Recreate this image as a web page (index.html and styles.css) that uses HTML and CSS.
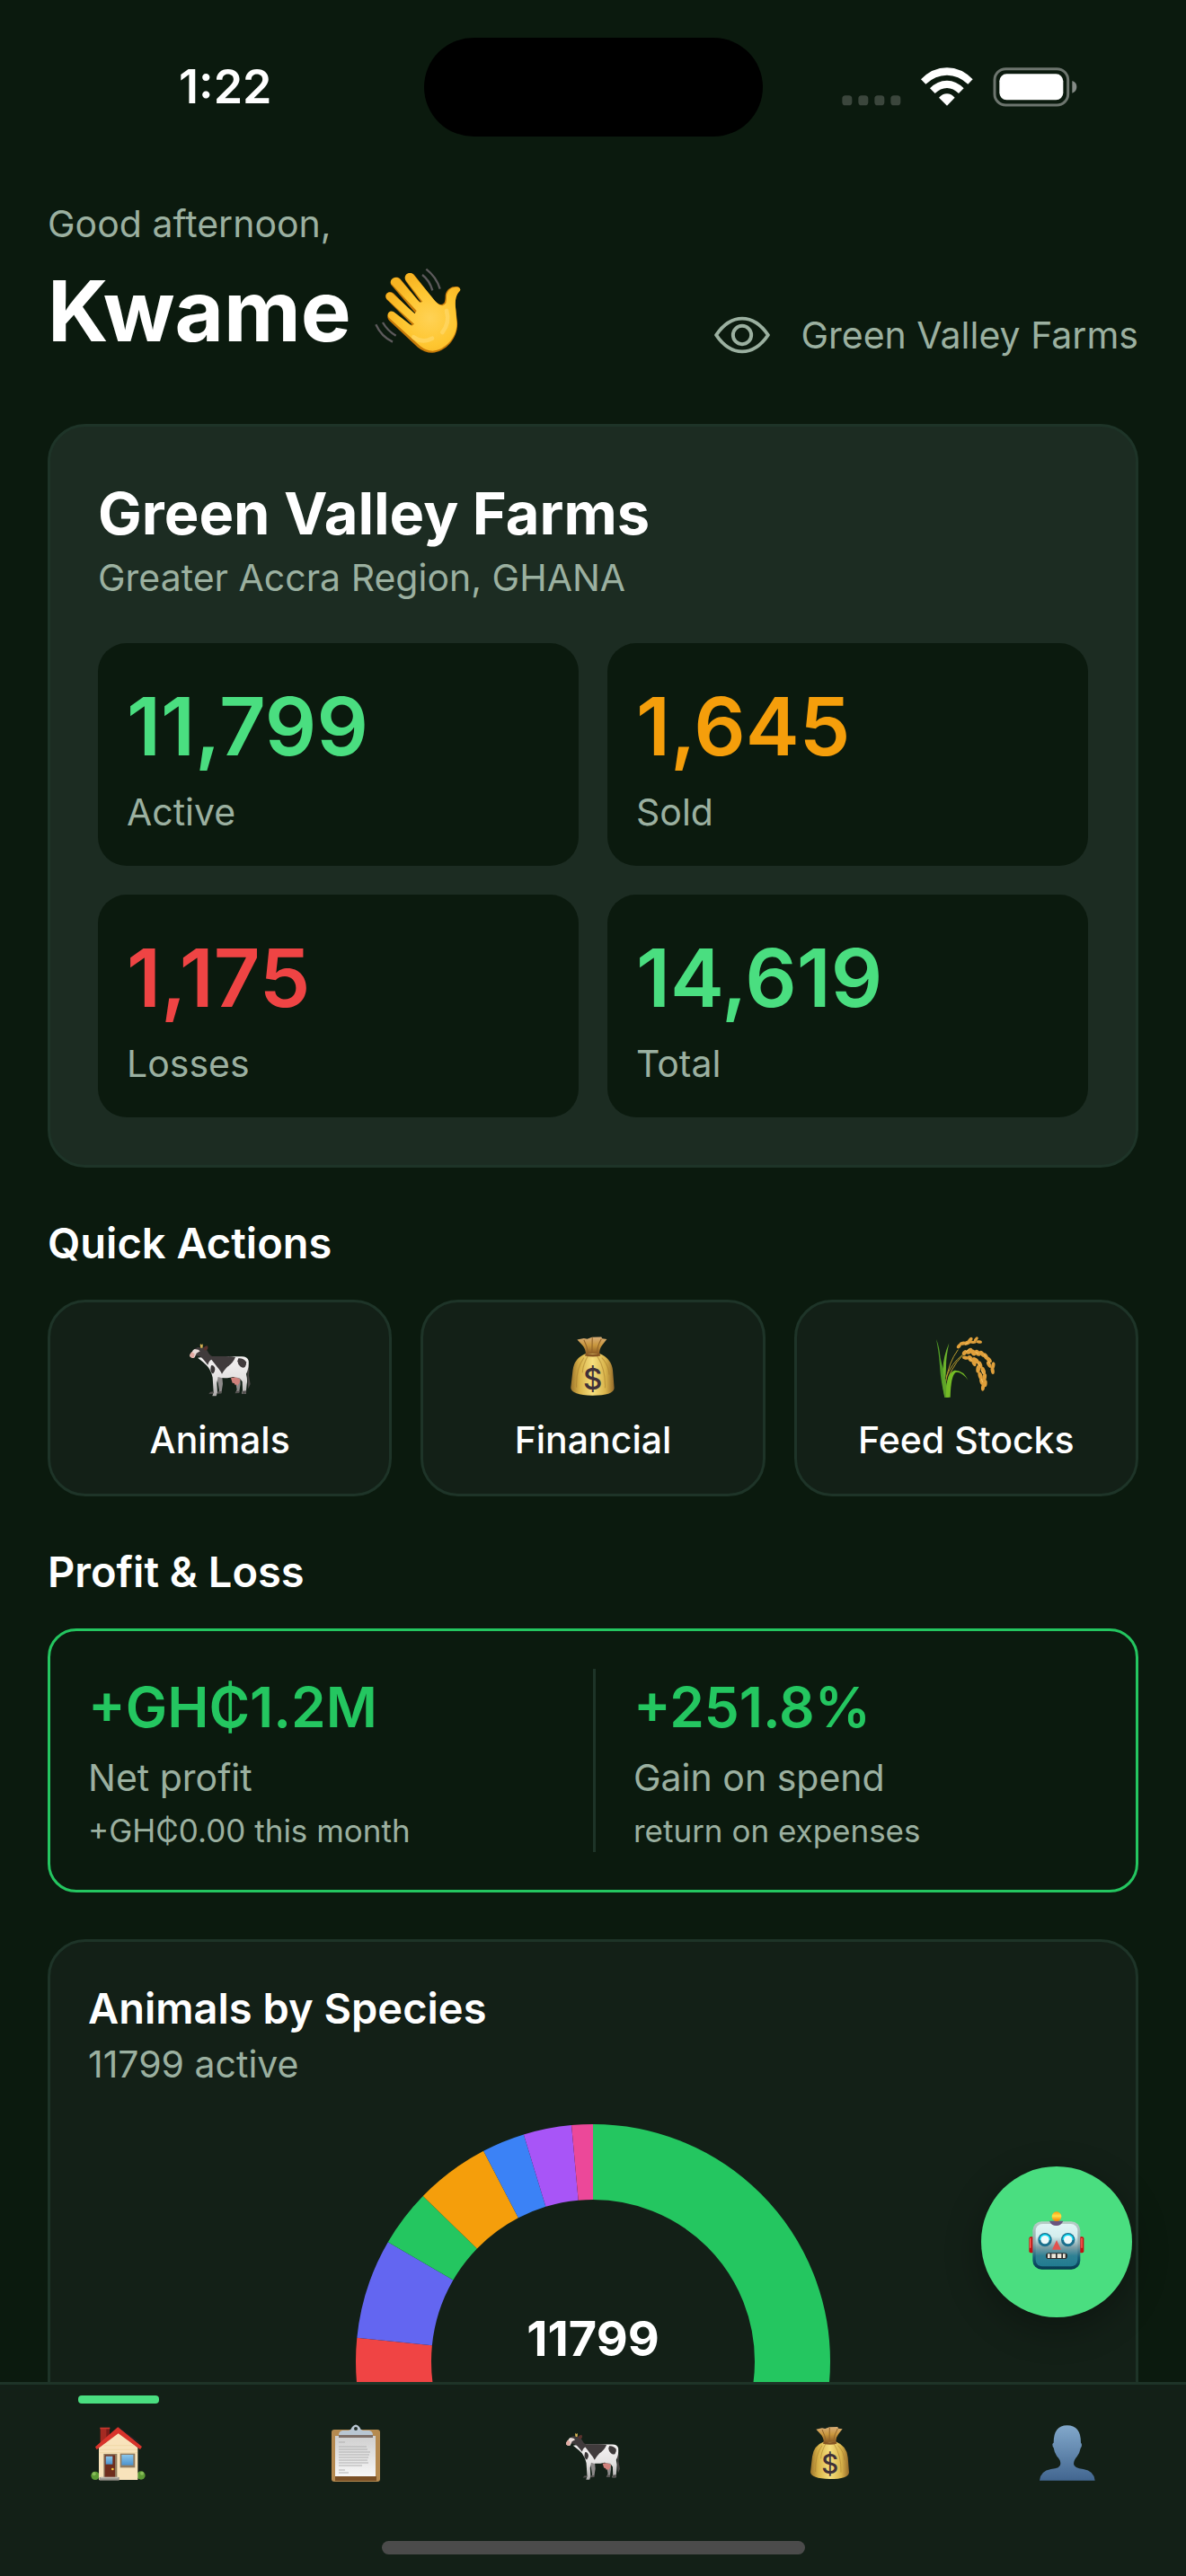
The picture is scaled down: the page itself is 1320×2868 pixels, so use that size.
FILE: index.html
```html
<!DOCTYPE html>
<html lang="en">
<head>
<meta charset="utf-8">
<meta name="viewport" content="width=device-width, initial-scale=1">
<title>Green Valley Farms</title>
<link rel="stylesheet" href="styles.css">
</head>
<body>
<svg class="defs" aria-hidden="true">
  <defs>
    <linearGradient id="bag-body" x1="0" x2="1" y1="0" y2="0">
      <stop offset="0" stop-color="#9c742c"/><stop offset=".2" stop-color="#d8b248"/><stop offset=".5" stop-color="#f6df7e"/><stop offset=".8" stop-color="#d9b44b"/><stop offset="1" stop-color="#94692a"/>
    </linearGradient>
    <linearGradient id="bag-neck" x1="0" x2="0" y1="0" y2="1">
      <stop offset="0" stop-color="#d9ae78"/><stop offset=".5" stop-color="#c8963c"/><stop offset="1" stop-color="#8a5a24"/>
    </linearGradient>
    <linearGradient id="person-fill" x1="0" x2="0" y1="0" y2="1">
      <stop offset="0" stop-color="#82a8cb"/><stop offset="1" stop-color="#426690"/>
    </linearGradient>
    <linearGradient id="robot-face" x1="0" x2="0" y1="0" y2="1">
      <stop offset="0" stop-color="#e0f5f5"/><stop offset=".3" stop-color="#d4eeee"/><stop offset=".55" stop-color="#7d9ea6"/><stop offset=".75" stop-color="#2f8194"/><stop offset="1" stop-color="#217b90"/>
    </linearGradient>
    <linearGradient id="robot-rim" x1="0" x2="0" y1="0" y2="1">
      <stop offset="0" stop-color="#b9cdc8"/><stop offset=".45" stop-color="#8ea9ab"/><stop offset=".75" stop-color="#15607a"/><stop offset="1" stop-color="#06384e"/>
    </linearGradient>
    <linearGradient id="bulb" x1="0" x2="0" y1="0" y2="1">
      <stop offset="0" stop-color="#ff9d0a"/><stop offset=".45" stop-color="#ffe04a"/><stop offset="1" stop-color="#f47c00"/>
    </linearGradient>
    <linearGradient id="cow-body" x1="0" x2="0" y1="0" y2="1">
      <stop offset="0" stop-color="#f4f2f2"/><stop offset=".55" stop-color="#e4e2e2"/><stop offset="1" stop-color="#aaa7a7"/>
    </linearGradient>
    <linearGradient id="paper" x1="0" x2="0" y1="0" y2="1">
      <stop offset="0" stop-color="#cfcfcf"/><stop offset="1" stop-color="#f7f7f7"/>
    </linearGradient>
    <linearGradient id="glass" x1="0" x2="0" y1="0" y2="1">
      <stop offset="0" stop-color="#8cc6ea"/><stop offset="1" stop-color="#4c93cd"/>
    </linearGradient>
    <radialGradient id="skin" gradientUnits="userSpaceOnUse" cx="235" cy="215" r="150">
      <stop offset="0" stop-color="#ffd255"/><stop offset=".6" stop-color="#fec630"/><stop offset="1" stop-color="#f7b423"/>
    </radialGradient>

    <symbol id="cow" viewBox="27 15 216 216">
      <path d="M226 95q8 28 5 60l5 28-7 16q-3-25-3-45z" fill="#4a4646"/>
      <path d="M122 155l20 5 2 22-5 32h-11l4-10-4-24zM182 155l20-2 1 30-5 30h-12l5-12z" fill="#8c8989"/>
      <path d="M60 95l30-4 110 0q26-3 30 14 2 25-8 44 5 20 2 34l-3 32h-14l3-12-1-28-9-12-22-4q-30 8-50 0l-4 20 2 32-4 12h-13l4-12-3-50q-4-20-16-36-10-12-34-30z" fill="url(#cow-body)"/>
      <path d="M50 65l10-5 24 1 9 12q8 16 16 17l45 0q18 0 32 3-8 20-27 32-12 13-18 24-7-14-15-22-10-14-20-26-8 3-12 18-12-16-20-24-10-8-24-7z" fill="#403b3c"/>
      <path d="M196 97q16-2 26 12 2 10-4 17-8 5-16-2-8-7-9-18z" fill="#403b3c"/>
      <path d="M106 120q9-1 12 12 0 10-6 16-8-2-9-14 0-10 3-14z" fill="#393536"/>
      <path d="M50 66q-6 2-8 8l-5 7q-5 4-3 10 8 8 16 3l6-14 12-7-6-5z" fill="#e9dcd9"/>
      <path d="M40 75q-7 8-6 15 5 7 13 5l3-13z" fill="#e2aaa2"/>
      <path d="M80 66q0-9 12-11 5 6 1 12-5 5-12 2z" fill="#5a312d"/>
      <path d="M70 62q-4-6-1-14l4 4 4-3q1 8-1 13z" fill="#d6b254"/>
      <path d="M171 163q14-6 31 4-1 14-7 17l-1 6-4-6-5 2-3-6-6-1z" fill="#cf817c"/>
      <path d="M102 209l11-1-2 7-14 1zM129 208l12-1-4 7-14 1zM190 206l11 0-3 7-14 1zM210 206l13-1-2 10-13 1z" fill="#53504f"/>
    </symbol>

    <symbol id="bag" viewBox="276 897 192 192">
      <path d="M352 955q-36 14-40 50l-6 52q2 22 64 23 63 0 65-22l-4-50q-3-38-41-53z" fill="url(#bag-body)"/>
      <path d="M345 968q-24 32-22 88M357 962q-16 30-16 50M384 962q26 40 24 96M398 968q20 20 22 50" fill="none" stroke="#a67c2c" stroke-width="3" opacity=".55"/>
      <path d="M325 914l20-4 10 2 14-5 28-1 2 5 14 2-14 18q-8 10-8 25l-40 1q-2-18-12-28z" fill="url(#bag-neck)"/>
      <path d="M345 915q10 20 13 40M370 908l-1 46M397 912q-12 20-14 43" fill="none" stroke="#93652a" stroke-width="3"/>
      <path d="M350 955q20 6 42 0l2 7q-22 6-46 0z" fill="#865522"/>
      <text x="371" y="1061" class="bag-sign">$</text>
    </symbol>

    <symbol id="rice" viewBox="30 15 216 216">
      <path d="M76 226q-4-60 14-88 16-30 38-52M70 180q10-70 42-112M72 160q18-46 55-75" fill="none" stroke="#b89a2e" stroke-width="3"/>
      <path d="M67 227q-14-60-16-105Q47 70 39 33q10 22 14 62 4 20 10 38 12 50 16 94z" fill="#4f9a26"/>
      <path d="M63 150q-6-46 19-104-10 45-10 76 0 30-4 50z" fill="#6cb42c"/>
      <path d="M67 227q-10-50-6-90 12 30 20 90z" fill="#5fa329"/>
      <path d="M72 227q-2-80 28-90 28-2 46 33-24-30-42-26-16 10-18 83z" fill="#74bb25"/>
      <g fill="#e0a03b">
        <ellipse cx="115" cy="56" rx="9" ry="6" transform="rotate(-50 115 56)"/><ellipse cx="127" cy="47" rx="11" ry="6" transform="rotate(-10 127 47)"/><ellipse cx="143" cy="45" rx="12" ry="7" transform="rotate(-25 143 45)"/><ellipse cx="152" cy="36" rx="11" ry="6" transform="rotate(-50 152 36)"/><ellipse cx="162" cy="43" rx="11" ry="5"/><ellipse cx="172" cy="33" rx="9" ry="5" transform="rotate(-50 172 33)"/><ellipse cx="182" cy="42" rx="10" ry="5" transform="rotate(10 182 42)"/>
        <ellipse cx="134" cy="78" rx="10" ry="7" transform="rotate(-50 134 78)"/><ellipse cx="150" cy="73" rx="12" ry="8" transform="rotate(-40 150 73)"/><ellipse cx="163" cy="78" rx="11" ry="8" transform="rotate(60 163 78)"/><ellipse cx="177" cy="79" rx="12" ry="8" transform="rotate(40 177 79)"/><ellipse cx="192" cy="82" rx="12" ry="7" transform="rotate(50 192 82)"/><ellipse cx="204" cy="90" rx="12" ry="7" transform="rotate(60 204 90)"/><ellipse cx="215" cy="102" rx="12" ry="7" transform="rotate(50 215 102)"/><ellipse cx="215" cy="118" rx="12" ry="6" transform="rotate(60 215 118)"/><ellipse cx="229" cy="121" rx="12" ry="6" transform="rotate(100 229 121)"/><ellipse cx="227" cy="137" rx="13" ry="6" transform="rotate(80 227 137)"/>
        <ellipse cx="137" cy="95" rx="11" ry="6" transform="rotate(10 137 95)"/><ellipse cx="153" cy="98" rx="12" ry="8" transform="rotate(50 153 98)"/><ellipse cx="170" cy="104" rx="13" ry="8" transform="rotate(40 170 104)"/><ellipse cx="165" cy="114" rx="10" ry="6" transform="rotate(60 165 114)"/><ellipse cx="185" cy="118" rx="13" ry="7" transform="rotate(70 185 118)"/><ellipse cx="179" cy="133" rx="13" ry="7" transform="rotate(95 179 133)"/><ellipse cx="196" cy="138" rx="13" ry="7" transform="rotate(70 196 138)"/><ellipse cx="186" cy="155" rx="13" ry="7" transform="rotate(75 186 155)"/><ellipse cx="200" cy="160" rx="13" ry="7" transform="rotate(100 200 160)"/><ellipse cx="191" cy="174" rx="12" ry="7" transform="rotate(75 191 174)"/><ellipse cx="203" cy="181" rx="12" ry="6" transform="rotate(95 203 181)"/><ellipse cx="195" cy="194" rx="12" ry="6" transform="rotate(95 195 194)"/>
      </g>
      <path d="M138 75l10-7M170 76l10 5M198 84l8 8M212 106l8 10M178 112l8 12M190 136l6 14M190 165l4 12M150 96l8 10M136 50l10-6" stroke="#f6c468" stroke-width="3"/>
    </symbol>

    <symbol id="house" viewBox="30 27 192 192">
      <circle cx="48" cy="199" r="14" fill="#5c9a35"/><circle cx="201" cy="198" r="14" fill="#5c9a35"/>
      <circle cx="44" cy="193" r="6" fill="#88bd58"/><circle cx="204" cy="191" r="6" fill="#88bd58"/>
      <path d="M65 39h31v40l-31 20z" fill="#a52a22"/><path d="M85 39h11v40l-11 8z" fill="#7c1b18"/><path d="M64 38h33v5h-33z" fill="#c8372e"/>
      <path d="M60 105l66-52 64 52v108H60z" fill="#f8e3bb"/>
      <path d="M62 112h127M62 122h127M76 98h100" stroke="#ecd19f" stroke-width="2"/>
      <path d="M48 103l76-67 80 66-6 9-73-53-72 54z" fill="#d8332b"/>
      <path d="M56 92l68-55 73 57-5-9-67-49z" fill="#262329"/>
      <path d="M76 126h45v82H76z" fill="#8f7b60"/><path d="M80 130h34v78H80z" fill="#6f2d1d"/>
      <path d="M83 134h23v27H83z" fill="url(#glass)"/><circle cx="106" cy="177" r="4" fill="#f8c93c"/>
      <path d="M131 125h50v47h-50z" fill="#8f7b60"/><path d="M136 129h39v35h-39z" fill="url(#glass)"/>
      <path d="M62 204h66v11H62z" fill="#97938c"/><path d="M66 203h58v5H66z" fill="#c0bbb2"/>
    </symbol>

    <symbol id="clipboard" viewBox="0 0 64 64">
      <rect x="5" y="6" width="54" height="58" rx="3" fill="#b58a50"/>
      <path d="M9 58h46v5H9z" fill="#7a5026"/>
      <path d="M9 13h45v45H9z" fill="url(#paper)"/>
      <path d="M13 12h38v3H13z" fill="#7d6f69"/>
      <path d="M13 12q0-4 4-5h7q3-1 4-4 4-5 8 0 1 3 4 4h7q4 1 4 5z" fill="#b9c6d2"/>
      <circle cx="32" cy="5" r="2" fill="#26312b"/>
      <path d="M13 20h7M13 25h31M13 28h32M13 31h35M13 34h34M13 37h33M13 40h32M13 43h33M13 46h26M13 51h7M13 54h11" stroke="#b0b0b0"/>
    </symbol>

    <symbol id="person" viewBox="1068 897 192 192">
      <path d="M1071 1085q3-32 38-38 32-2 32-18 0-14-12-25-9-13-11-28-4-4-4-12 2-5 4-5 0-58 45-58 46 0 46 58 3 2 3 7 0 8-4 11-3 16-12 28-11 12-11 25 1 14 32 17 36 6 39 38z" fill="url(#person-fill)"/>
    </symbol>

    <symbol id="robot" viewBox="1028 184 198 198">
      <rect x="1035" y="272" width="16" height="54" rx="6" fill="#c01414"/><rect x="1202" y="272" width="16" height="54" rx="6" fill="#c01414"/>
      <rect x="1037" y="276" width="4" height="34" rx="2" fill="#ff6a5c"/><rect x="1209" y="276" width="4" height="34" rx="2" fill="#ff6a5c"/>
      <rect x="1047" y="221" width="159" height="160" rx="30" fill="url(#robot-rim)"/>
      <rect x="1057" y="229" width="140" height="142" rx="22" fill="url(#robot-face)"/>
      <path d="M1103 219h46q-7 16-23 16-17 0-23-16z" fill="#69547f"/>
      <circle cx="1127" cy="204" r="16" fill="url(#bulb)"/>
      <circle cx="1088" cy="282" r="23" fill="#1b6f8d"/><path d="M1069 282a19 19 0 0 1 38 0z" fill="#10dcf4"/><circle cx="1088" cy="282" r="14" fill="#eefafa"/>
      <circle cx="1165" cy="282" r="23" fill="#1b6f8d"/><path d="M1146 282a19 19 0 0 1 38 0z" fill="#10dcf4"/><circle cx="1165" cy="282" r="14" fill="#eefafa"/>
      <path d="M1127 283l15 32h-30z" fill="#e2524f"/>
      <rect x="1091" y="326" width="72" height="20" rx="10" fill="#2a2c2c"/>
      <path d="M1097 329h8v14h-8zM1110 329h14v14h-14zM1129 329h14v14h-14zM1148 329h8v14h-8z" fill="#ece8dc"/>
    </symbol>

    <symbol id="wave" viewBox="50 46 288 288">
      <path d="M222 51q34 26 46 66M209 70q24 18 34 52M54 236q18 40 56 58M77 229q16 28 44 44" fill="none" stroke="#5d5a5c" stroke-width="7"/>
      <path d="M104 102c-6-18 18-32 32-18l58 70 14 12-52-72c-14-22 10-40 26-24l66 84q22 24 34 10 4-8 4-26c4-22 24-32 42-28 8 3 10 10 4 16-12 12-14 34-12 52l6 50c4 52-38 100-84 102q-26 0-48-18l-96-90c-14-18 4-32 18-24l52 40 6-2-84-84c-12-18 8-32 24-20l66 68 6-2z" fill="#c77a08"/>
      <path d="M104 98c-4-16 18-26 30-14l66 78 10-2-58-74c-6-18 16-30 28-16l72 88q24 26 36 6 2-10 2-26c4-20 22-30 40-26 6 4 8 8 4 12-14 14-16 34-14 54l4 50c4 50-40 94-80 96q-22 0-42-16l-106-96c-8-14 6-26 18-18l60 46 8-6-92-84c-8-14 6-28 20-18l74 68 6-10z" fill="url(#skin)"/>
      <path d="M290 190q12 40-14 72M180 278q30 22 62 4" fill="none" stroke="#ffdb70" stroke-width="14" stroke-linecap="round" opacity=".6"/>
    </symbol>
  </defs>
</svg>

<div class="app">
  <div class="status-bar">
    <time class="clock">1:22</time>
    <div class="island"></div>
    <svg class="status-icons" viewBox="50 44 786 132" role="img" aria-label="Wi-Fi connected, battery full">
      <g fill="#3b463c"><rect x="51" y="138" width="33" height="33" rx="11"/><rect x="105" y="138" width="33" height="33" rx="11"/><rect x="159" y="138" width="33" height="33" rx="11"/><rect x="213" y="138" width="33" height="33" rx="11"/></g>
      <g fill="#fff">
        <path d="M314 84q38-39 87-39 48 0 86 39l-16 16q-32-30-70-30-39 0-71 30z"/>
        <path d="M344 114q24-26 57-26 31 0 56 26l-17 17q-18-18-39-18-22 0-40 18z"/>
        <path d="M374 145q12-13 27-13 14 0 26 13l-26 27z"/>
      </g>
      <rect x="560" y="49" width="245" height="121" rx="37" fill="none" stroke="#6d756e" stroke-width="9"/>
      <rect x="576" y="66" width="213" height="87" rx="24" fill="#fff"/>
      <path d="M819 89q15 5 15 20t-15 21z" fill="#858b86"/>
    </svg>
  </div>

  <main class="content">
    <header class="greeting">
      <div>
        <p class="muted">Good afternoon,</p>
        <h1 class="name">Kwame <svg class="wave" aria-hidden="true"><use href="#wave"/></svg></h1>
      </div>
      <button class="farm-switch" type="button">
        <svg class="eye" viewBox="0 0 188 128" aria-hidden="true"><path d="M6 64q38-56 88-56t88 56q-38 56-88 56T6 64z" fill="none" stroke="currentColor" stroke-width="12" stroke-linejoin="round"/><circle cx="94" cy="64" r="31" fill="none" stroke="currentColor" stroke-width="12"/></svg>
        Green Valley Farms
      </button>
    </header>

    <section class="farm">
      <h2 class="farm-name">Green Valley Farms</h2>
      <p class="muted">Greater Accra Region, GHANA</p>
      <div class="stats">
        <div class="stat"><strong class="figure mint">11,799</strong><span class="muted">Active</span></div>
        <div class="stat"><strong class="figure amber">1,645</strong><span class="muted">Sold</span></div>
        <div class="stat"><strong class="figure red">1,175</strong><span class="muted">Losses</span></div>
        <div class="stat"><strong class="figure mint">14,619</strong><span class="muted">Total</span></div>
      </div>
    </section>

    <section class="section">
      <h2 class="heading">Quick Actions</h2>
      <div class="actions">
        <button class="action" type="button"><svg class="action-icon" aria-hidden="true"><use href="#cow"/></svg>Animals</button>
        <button class="action" type="button"><svg class="action-icon" aria-hidden="true"><use href="#bag"/></svg>Financial</button>
        <button class="action" type="button"><svg class="action-icon" aria-hidden="true"><use href="#rice"/></svg>Feed Stocks</button>
      </div>
    </section>

    <section class="section">
      <h2 class="heading">Profit &amp; Loss</h2>
      <div class="profit">
        <div class="profit-item"><strong class="profit-value">+GH₵1.2M</strong><span class="muted">Net profit</span><small class="note">+GH₵0.00 this month</small></div>
        <div class="profit-item"><strong class="profit-value">+251.8%</strong><span class="muted">Gain on spend</span><small class="note">return on expenses</small></div>
      </div>
    </section>

    <section class="species">
      <h2 class="heading">Animals by Species</h2>
      <p class="muted species-count">11799 active</p>
      <div class="donut">
        <svg class="ring" viewBox="0 0 528 528" aria-hidden="true">
          <g transform="rotate(-90 264 264)" fill="none" stroke-width="84">
            <circle cx="264" cy="264" r="222" pathLength="3600" stroke="#24c660" stroke-dasharray="2150 1450"/>
            <circle cx="264" cy="264" r="222" pathLength="3600" stroke="#f04444" stroke-dasharray="607 2993" stroke-dashoffset="-2150"/>
            <circle cx="264" cy="264" r="222" pathLength="3600" stroke="#6366f1" stroke-dasharray="245 3355" stroke-dashoffset="-2757"/>
            <circle cx="264" cy="264" r="222" pathLength="3600" stroke="#24c660" stroke-dasharray="140 3460" stroke-dashoffset="-3002"/>
            <circle cx="264" cy="264" r="222" pathLength="3600" stroke="#f59e0b" stroke-dasharray="183 3417" stroke-dashoffset="-3142"/>
            <circle cx="264" cy="264" r="222" pathLength="3600" stroke="#3b82f6" stroke-dasharray="105 3495" stroke-dashoffset="-3325"/>
            <circle cx="264" cy="264" r="222" pathLength="3600" stroke="#a855f7" stroke-dasharray="118 3482" stroke-dashoffset="-3430"/>
            <circle cx="264" cy="264" r="222" pathLength="3600" stroke="#ec4899" stroke-dasharray="52 3548" stroke-dashoffset="-3548"/>
          </g>
        </svg>
        <strong class="donut-total">11799</strong>
      </div>
    </section>

    <button class="assistant" type="button" aria-label="Assistant"><svg class="assistant-icon" aria-hidden="true"><use href="#robot"/></svg></button>
  </main>

  <footer class="bottom">
    <nav class="tabs">
      <a class="tab active" href="#home" aria-label="Home"><svg class="tab-icon" aria-hidden="true"><use href="#house"/></svg></a>
      <a class="tab" href="#records" aria-label="Records"><svg class="tab-icon" aria-hidden="true"><use href="#clipboard"/></svg></a>
      <a class="tab" href="#animals" aria-label="Animals"><svg class="tab-icon" aria-hidden="true"><use href="#cow"/></svg></a>
      <a class="tab" href="#finance" aria-label="Finance"><svg class="tab-icon" aria-hidden="true"><use href="#bag"/></svg></a>
      <a class="tab" href="#profile" aria-label="Profile"><svg class="tab-icon" aria-hidden="true"><use href="#person"/></svg></a>
    </nav>
    <div class="home-bar"></div>
  </footer>
</div>
</body>
</html>
```
FILE: styles.css
```css
:root {
  --bg: #0b1a0e;
  --surface: #132017;
  --surface-raised: #1c2c22;
  --line: #1e3428;
  --text: #fff;
  --muted: #9bb0a0;
  --mint: #4ade80;
  --green: #24c660;
}

* { box-sizing: border-box; }

body {
  margin: 0;
  background: var(--bg);
  color: var(--text);
  font: 400 41px/54px Inter, "Liberation Sans", sans-serif;
}

h1, h2, p { margin: 0; }

button {
  font: inherit;
  color: inherit;
  padding: 0;
  border: 0;
  background: none;
}

.defs { position: absolute; width: 0; height: 0; }
.bag-sign { font: 500 88px Inter, sans-serif; fill: #3f3038; text-anchor: middle; }

.app { display: flex; flex-direction: column; height: 100vh; }

.status-bar {
  display: grid;
  grid-template-columns: 1fr 377px 1fr;
  align-items: center;
  padding: 42px 0 70px;
}
.clock { padding-left: 30px; text-align: center; font-size: 52px; font-weight: 600; }
.island { height: 110px; border-radius: 55px; background: #000; }
.status-icons { width: 262px; height: 44px; justify-self: center; margin-right: 32px; }

.content {
  position: relative;
  flex: 1;
  min-height: 0;
  overflow: hidden;
  padding: 0 53px;
}

.muted { color: var(--muted); }

.greeting {
  display: flex;
  justify-content: space-between;
  align-items: flex-end;
  margin-bottom: 66px;
}
.name {
  display: flex;
  align-items: center;
  gap: 26px;
  margin-top: 10px;
  font-size: 94px;
  line-height: 120px;
  font-weight: 700;
}
.wave { width: 96px; height: 96px; }
.farm-switch {
  display: flex;
  align-items: center;
  gap: 34px;
  padding-bottom: 6px;
  color: var(--muted);
}
.eye { width: 62px; height: 42px; }

.farm {
  padding: 53px;
  border: 3px solid var(--line);
  border-radius: 42px;
  background: var(--surface-raised);
}
.farm-name { font-size: 65px; line-height: 88px; font-weight: 700; }
.stats { display: grid; grid-template-columns: 1fr 1fr; gap: 32px; margin-top: 46px; }
.stat {
  display: flex;
  flex-direction: column;
  gap: 8px;
  padding: 33px 32px;
  border-radius: 32px;
  background: var(--bg);
}
.figure { font-size: 90px; line-height: 120px; font-weight: 600; }
.mint { color: var(--mint); }
.amber { color: #f59e0b; }
.red { color: #ef4444; }

.section { margin-top: 54px; }
.heading { font-size: 47px; line-height: 60px; font-weight: 600; }

.actions { display: grid; grid-template-columns: repeat(3, 1fr); gap: 32px; margin-top: 33px; }
.action {
  display: flex;
  flex-direction: column;
  align-items: center;
  gap: 19px;
  padding: 35px 0 33px;
  border: 3px solid var(--line);
  border-radius: 42px;
  background: var(--surface);
  font-weight: 500;
}
.action-icon { width: 72px; height: 72px; }

.profit {
  display: grid;
  grid-template-columns: 1fr 1fr;
  margin-top: 33px;
  padding: 42px 0;
  border: 3px solid var(--green);
  border-radius: 32px;
}
.profit-item { display: flex; flex-direction: column; gap: 8px; padding: 0 42px; }
.profit-item + .profit-item { border-left: 3px solid var(--line); }
.profit-value { font-size: 62px; line-height: 86px; font-weight: 600; color: var(--green); }
.note { font-size: 35px; line-height: 48px; color: var(--muted); }

.species {
  margin-top: 52px;
  padding: 44px 42px;
  border: 3px solid var(--line);
  border-radius: 42px;
  background: var(--surface);
}
.species-count { margin-top: 5px; }
.donut { display: grid; place-items: center; margin-top: 40px; }
.ring, .donut-total { grid-area: 1 / 1; }
.ring { width: 528px; height: 528px; }
.donut-total { padding-bottom: 50px; font-size: 54px; font-weight: 700; }

.assistant {
  position: absolute;
  right: 60px;
  bottom: 72px;
  display: grid;
  place-items: center;
  width: 168px;
  height: 168px;
  padding-bottom: 4px;
  border-radius: 50%;
  background: var(--mint);
  box-shadow: 0 12px 40px rgb(0 0 0 / 30%);
}
.assistant-icon { width: 66px; height: 66px; }

.bottom { border-top: 3px solid var(--line); background: var(--surface); }
.tabs { display: grid; grid-template-columns: repeat(5, 1fr); }
.tab {
  display: flex;
  flex-direction: column;
  align-items: center;
  padding: 44px 0 66px;
}
.tab-icon { width: 64px; height: 64px; }
.tab.active { padding-top: 12px; }
.tab.active::before {
  content: "";
  width: 90px;
  height: 9px;
  margin-bottom: 23px;
  border-radius: 4px;
  background: var(--mint);
}
.home-bar {
  width: 471px;
  height: 15px;
  margin: 0 auto 24px;
  border-radius: 8px;
  background: #4b4b4b;
}
```
